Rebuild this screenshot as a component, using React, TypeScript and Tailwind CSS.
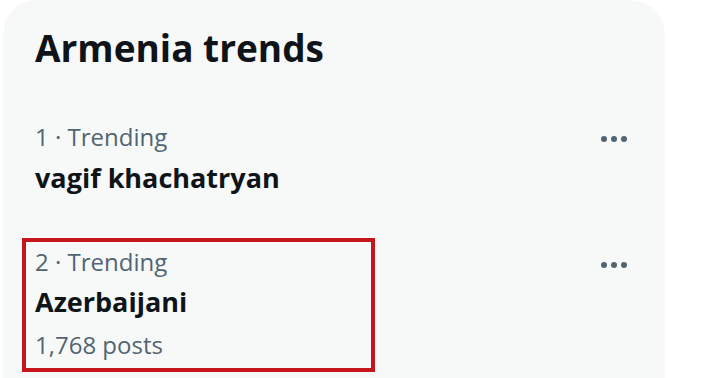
import * as React from 'react'

const FONT = { fontFamily: '"Open Sans", "Noto Sans", sans-serif' }

function Dots() {
  return (
    <svg width="28" height="8" viewBox="0 0 28 8" className="block">
      <circle cx="4" cy="4" r="3" fill="#536471" />
      <circle cx="14" cy="4" r="3" fill="#536471" />
      <circle cx="24" cy="4" r="3" fill="#536471" />
    </svg>
  )
}

export default function App() {
  return (
    <div className="h-[378px] w-[715px] overflow-hidden bg-white" style={FONT}>
      <div className="ml-[3px] h-[420px] w-[662px] rounded-[34px] bg-[#f7f9f9] pl-[32px] pr-[37px] pt-[23px]">
        <h2 className="text-[37px] font-bold leading-[50px] text-[#0f1419]">Armenia trends</h2>

        <div className="mt-[44px] flex items-start justify-between">
          <div>
            <div className="text-[24px] leading-[40px] text-[#536471]">1 · Trending</div>
            <div className="text-[27px] font-bold leading-[42px] text-[#0f1419]">vagif khachatryan</div>
          </div>
          <div className="mt-[18px]">
            <Dots />
          </div>
        </div>

        <div className="mt-[39px] flex items-start justify-between">
          <div className="-ml-[13px] w-[353px] border-4 border-[#c5161d] pl-[9px]">
            <div className="text-[24px] leading-[40px] text-[#536471]">2 · Trending</div>
            <div className="text-[27px] font-bold leading-[40px] text-[#0f1419]">Azerbaijani</div>
            <div className="text-[24px] leading-[46px] text-[#536471]">1,768 posts</div>
          </div>
          <div className="mt-[23px]">
            <Dots />
          </div>
        </div>
      </div>
    </div>
  )
}
